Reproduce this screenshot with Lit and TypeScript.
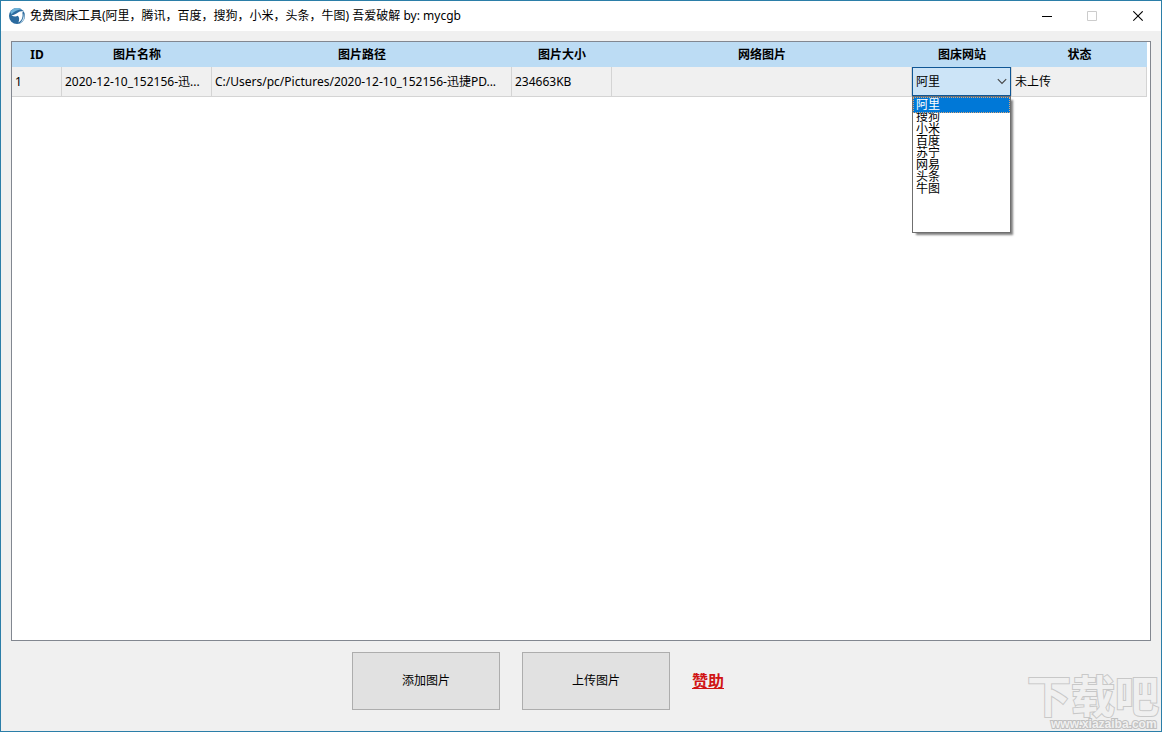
import { LitElement, html, css, svg } from "lit";
import { customElement, state } from "lit/decorators.js";
import { classMap } from "lit/directives/class-map.js";

interface ImageRow {
  id: number;
  name: string;
  path: string;
  size: string;
  url: string;
  status: string;
}

const HOSTS = ["阿里", "搜狗", "小米", "百度", "苏宁", "网易", "头条", "牛图"];

const ROWS: ImageRow[] = [
  {
    id: 1,
    name: "2020-12-10_152156-迅...",
    path: "C:/Users/pc/Pictures/2020-12-10_152156-迅捷PD...",
    size: "234663KB",
    url: "",
    status: "未上传",
  },
];

const appLogo = svg`
  <circle cx="8" cy="8" r="8" fill="#2a6a9e"/>
  <path d="M1.2 4A8 8 0 0 1 13 1.6C9 1.8 5 3 2.6 6.6Z" fill="#6fb2d8"/>
  <path d="M2.4 7.2C5.4 7 7 5.8 9 4.4C10.8 3.2 13 3 14.6 3.6C13.6 4 13.3 4.6 13.5 5.6C14 9 13 12.6 9.4 14.6C10.6 11.6 10.4 9.2 8.8 7.8C7 8.8 4.4 8.6 2.4 7.2Z" fill="#fff"/>
  <path d="M14.8 5.4C16.4 8.4 15.6 13.4 10.6 15.6C13.4 12.8 14.6 9.6 14.8 5.4Z" fill="#c3dcea"/>`;

/** Drop-down for choosing the image host of one row. */
@customElement("host-picker")
export class HostPicker extends LitElement {
  @state() private value = HOSTS[0];
  @state() private open = true;

  static styles = css`
    :host { display: block; position: relative; height: 100%; }
    .select {
      appearance: none;
      display: block;
      box-sizing: border-box;
      width: 100%;
      height: 29px;
      margin: 0;
      padding: 0 20px 0 3px;
      border: 1px solid #0f5694;
      border-radius: 0;
      outline: none;
      background: #cce4f7;
      color: #000;
      font: inherit;
    }
    .chevron { position: absolute; right: 4px; top: 11px; width: 10px; height: 7px; pointer-events: none; }
    .menu {
      position: absolute;
      z-index: 2;
      top: 29px;
      left: 0;
      right: 0;
      box-sizing: border-box;
      height: 137px;
      margin: 0;
      padding: 2px 0 0;
      list-style: none;
      background: #fff;
      border: 1px solid #6f6f6f;
      box-shadow: 3px 3px 2px -1px rgba(0, 0, 0, 0.5);
    }
    .option { position: relative; height: 12px; padding-left: 3px; line-height: 12px; }
    .option.active { z-index: 1; color: #fff; }
    .option.active::before {
      content: "";
      position: absolute;
      z-index: -1;
      inset: -2px 0 -2px;
      background: #0078d7;
      outline: 1px dotted #d9a679;
      outline-offset: -1px;
    }
  `;

  private choose(value: string) {
    this.value = value;
    this.open = false;
  }

  render() {
    return html`
      <select class="select" aria-label="图床网站" .value=${this.value}
        @change=${(e: Event) => this.choose((e.target as HTMLSelectElement).value)}>
        ${HOSTS.map((h) => html`<option value=${h}>${h}</option>`)}
      </select>
      <svg class="chevron" viewBox="0 0 10 7" aria-hidden="true">
        <path d="M.8 1.2L5 5.4L9.2 1.2" fill="none" stroke="#444" stroke-width="1.1"/>
      </svg>
      ${this.open
        ? html`<ul class="menu" role="listbox" aria-label="图床网站">
            ${HOSTS.map((h) => html`
              <li class=${classMap({ option: true, active: h === this.value })} role="option"
                aria-selected=${h === this.value ? "true" : "false"}
                @click=${() => this.choose(h)}>${h}</li>`)}
          </ul>`
        : null}
    `;
  }
}

@customElement("app-root")
export class AppRoot extends LitElement {
  static styles = css`
    :host {
      display: flex;
      flex-direction: column;
      box-sizing: border-box;
      min-height: 100vh;
      position: relative;
      overflow: hidden;
      border: 1px solid #2b7ea8;
      background: #f0f0f0;
      color: #000;
      font: 12px/16px "Noto Sans", "Noto Sans CJK SC", sans-serif;
    }
    .titlebar { display: flex; align-items: center; height: 30px; padding-left: 8px; background: #fff; }
    .logo { width: 16px; height: 16px; margin-right: 5px; }
    .title { flex: 1; margin: 0; font-size: 12px; font-weight: 400; white-space: nowrap; }
    .winbtn {
      display: grid;
      place-items: center;
      width: 46px;
      height: 30px;
      padding: 0;
      border: 0;
      background: none;
    }
    .winbtn svg { width: 11px; height: 11px; }
    .grid { flex: 1; margin: 10px 10px 0; padding-right: 3px; border: 1px solid #828790; background: #fff; }
    .table { width: 100%; border-collapse: separate; border-spacing: 0; table-layout: fixed; }
    .table th { height: 25px; padding: 0; background: #bcdcf4; font-weight: 700; }
    .table td {
      box-sizing: border-box;
      height: 30px;
      padding: 0 3px;
      border-right: 1px solid #d4d4d4;
      border-bottom: 1px solid #d4d4d4;
      background: #f0f0f0;
      white-space: nowrap;
    }
    .table td.picker { padding: 0; }
    .c-id { width: 50px; }
    .c-name { width: 150px; }
    .c-path { width: 300px; }
    .c-size { width: 100px; }
    .c-url { width: 300px; }
    .c-host { width: 100px; }
    .actions { display: flex; align-items: center; justify-content: center; gap: 22px; padding: 11px 86px 21px 0; }
    .button {
      width: 148px;
      height: 58px;
      padding: 0;
      border: 1px solid #adadad;
      background: #e1e1e1;
      color: #000;
      font: inherit;
    }
    .sponsor { color: #d01414; font-size: 16px; font-weight: 700; line-height: 20px; }
    .mark { position: absolute; right: 0; bottom: 0; width: 136px; height: 64px; pointer-events: none; }
    .mark-name {
      font: 700 44px "Noto Sans CJK SC", sans-serif;
      fill: #f0f0f0;
      stroke: #c8c8c8;
      stroke-width: 2px;
      paint-order: stroke;
    }
    .mark-site {
      font: 700 12px "Liberation Sans", sans-serif;
      fill: #f0f0f0;
      stroke: #c0c0c0;
      stroke-width: 2px;
      paint-order: stroke;
    }
  `;

  render() {
    return html`
      <header class="titlebar">
        <svg class="logo" viewBox="0 0 16 16" aria-hidden="true">${appLogo}</svg>
        <h1 class="title">免费图床工具(阿里，腾讯，百度，搜狗，小米，头条，牛图) 吾爱破解 by: mycgb</h1>
        <button class="winbtn" aria-label="最小化">
          <svg viewBox="0 0 11 11"><path d="M1 5.5H11" stroke="#000"/></svg>
        </button>
        <button class="winbtn" aria-label="最大化" disabled>
          <svg viewBox="0 0 11 11"><path d="M.5 .5H9.5V9.5H.5Z" fill="none" stroke="#ccc"/></svg>
        </button>
        <button class="winbtn" aria-label="关闭">
          <svg viewBox="0 0 11 11"><path d="M.3 .3L9.7 9.7M9.7 .3L.3 9.7" stroke="#000" stroke-width="1.1"/></svg>
        </button>
      </header>

      <main class="grid">
        <table class="table">
          <thead>
            <tr>
              <th class="c-id">ID</th>
              <th class="c-name">图片名称</th>
              <th class="c-path">图片路径</th>
              <th class="c-size">图片大小</th>
              <th class="c-url">网络图片</th>
              <th class="c-host">图床网站</th>
              <th>状态</th>
            </tr>
          </thead>
          <tbody>
            ${ROWS.map((r) => html`
              <tr>
                <td>${r.id}</td>
                <td>${r.name}</td>
                <td>${r.path}</td>
                <td>${r.size}</td>
                <td>${r.url}</td>
                <td class="picker"><host-picker></host-picker></td>
                <td>${r.status}</td>
              </tr>`)}
          </tbody>
        </table>
      </main>

      <footer class="actions">
        <button class="button">添加图片</button>
        <button class="button">上传图片</button>
        <a class="sponsor" href="#">赞助</a>
      </footer>

      <svg class="mark" viewBox="0 0 136 64" aria-hidden="true">
        <text class="mark-name" x="2" y="46">下载吧</text>
        <text class="mark-site" x="26" y="61">www.xiazaiba.com</text>
      </svg>
    `;
  }
}
